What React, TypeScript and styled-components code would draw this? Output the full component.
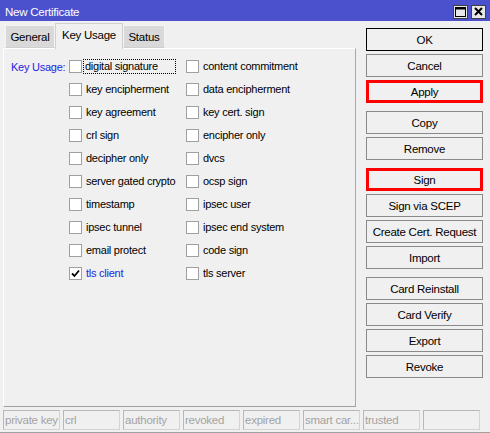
import styled, { createGlobalStyle } from "styled-components";

const GlobalStyle = createGlobalStyle`
  html, body {
    margin: 0;
    padding: 0;
    background: #f0f0f0;
  }
  * {
    box-sizing: border-box;
  }
`;

const Janela = styled.div`
  width: 490px;
  height: 433px;
  display: flex;
  flex-direction: column;
  background: #f0f0f0;
  font-family: "Liberation Sans", Arial, sans-serif;
  font-size: 11px;
  letter-spacing: -0.25px;
  color: #000;
  overflow: hidden;
  white-space: nowrap;
`;

const BarraTitulo = styled.div`
  height: 21px;
  flex-shrink: 0;
  display: flex;
  align-items: center;
  justify-content: space-between;
  padding: 0 4px 0 5px;
  background: #4b50cc;
  color: #fff;
  font-size: 11.5px;
`;

const Titulo = styled.span`
  padding-top: 2px;
`;

const BotoesTitulo = styled.div`
  display: flex;
  gap: 3px;
  margin-top: 2px;
`;

const BotaoTitulo = styled.div`
  width: 15px;
  height: 14px;
  background: #e8e8e8;
  border: 1px solid #404040;
  display: flex;
  align-items: center;
  justify-content: center;
`;

const Corpo = styled.div`
  flex: 1;
  display: flex;
  padding-top: 2px;
`;

const ColunaEsquerda = styled.div`
  width: 356px;
  padding-left: 3px;
  display: flex;
  flex-direction: column;
`;

const Abas = styled.div`
  height: 25px;
  display: flex;
  align-items: flex-end;
  padding-left: 2px;
  position: relative;
  z-index: 1;
  font-size: 11.5px;
`;

const Aba = styled.div<{ $ativa?: boolean; $largura: number }>`
  width: ${(p) => p.$largura}px;
  height: ${(p) => (p.$ativa ? 26 : 23)}px;
  margin-bottom: ${(p) => (p.$ativa ? -1 : 0)}px;
  display: flex;
  align-items: center;
  justify-content: center;
  padding-bottom: ${(p) => (p.$ativa ? 4 : 0)}px;
  background: ${(p) => (p.$ativa ? "#f0f0f0" : "#d9d9d9")};
  border: 1px solid ${(p) => (p.$ativa ? "#d0d0d0" : "#f4f4f4")};
  border-bottom: ${(p) => (p.$ativa ? "none" : "1px solid #d0d0d0")};
`;

const Painel = styled.div`
  height: 359px;
  border: 1px solid #d8d8d8;
  border-top-color: #ffffff;
  border-left-color: #ffffff;
  border-right-color: #a8a8a8;
  border-bottom-color: #a0a0a0;
  padding: 10px 0 0 7px;
`;

const Grade = styled.div`
  display: grid;
  grid-template-columns: 58px 117px 1fr;
  grid-auto-rows: 23px;
`;

const Rotulo = styled.div`
  color: #1e1ee6;
  display: flex;
  align-items: flex-start;
  padding-top: 2px;
`;

const Opcao = styled.label<{ $coluna: number }>`
  grid-column: ${(p) => p.$coluna};
  display: flex;
  align-items: flex-start;
  gap: 3px;
  padding-top: 1px;
`;

const Caixa = styled.span`
  width: 13px;
  height: 13px;
  flex-shrink: 0;
  background: #fff;
  border: 1px solid #a0a0a0;
  display: flex;
  align-items: center;
  justify-content: center;
`;

const TextoOpcao = styled.span<{ $foco?: boolean; $azul?: boolean }>`
  color: ${(p) => (p.$azul ? "#1e1ee6" : "#000")};
  line-height: 13px;
  padding: 0 1px;
  ${(p) =>
    p.$foco
      ? `outline: 1px dotted #000; outline-offset: 0; min-width: 91px; margin-left: -1px;`
      : ""}
`;

const ColunaBotoes = styled.div`
  width: 117px;
  margin-left: 10px;
  padding-top: 5px;
  display: flex;
  flex-direction: column;
`;

const Grupo = styled.div`
  display: flex;
  flex-direction: column;
  gap: 3px;
  & + & {
    margin-top: 8px;
  }
`;

const Botao = styled.button<{ $padrao?: boolean; $destaque?: boolean }>`
  height: 23px;
  width: 117px;
  font-family: inherit;
  font-size: 11.5px;
  letter-spacing: -0.25px;
  color: #000;
  background: #f0f0f0;
  border: ${(p) =>
    p.$destaque ? "3px solid #ff0000" : p.$padrao ? "1px solid #000" : "1px solid #8a8a8a"};
  padding: 0;
  cursor: pointer;
`;

const BarraStatus = styled.div`
  display: flex;
  gap: 3px;
  padding: 2px 0 0 3px;
  height: 25px;
  border-bottom: 1px solid #a0a0a0;
`;

const CampoStatus = styled.div`
  width: 57px;
  height: 20px;
  border: 1px solid #d4d4d4;
  border-top-color: #b8b8b8;
  border-left-color: #b8b8b8;
  color: #a3a3a3;
  padding: 3px 0 0 1px;
  font-size: 11.5px;
  overflow: hidden;
`;

const opcoes = [
  ["digital signature", "content commitment"],
  ["key encipherment", "data encipherment"],
  ["key agreement", "key cert. sign"],
  ["crl sign", "encipher only"],
  ["decipher only", "dvcs"],
  ["server gated crypto", "ocsp sign"],
  ["timestamp", "ipsec user"],
  ["ipsec tunnel", "ipsec end system"],
  ["email protect", "code sign"],
  ["tls client", "tls server"],
];

const grupos = [
  [
    { texto: "OK", padrao: true },
    { texto: "Cancel" },
    { texto: "Apply", destaque: true },
  ],
  [{ texto: "Copy" }, { texto: "Remove" }],
  [
    { texto: "Sign", destaque: true },
    { texto: "Sign via SCEP" },
    { texto: "Create Cert. Request" },
    { texto: "Import" },
  ],
  [
    { texto: "Card Reinstall" },
    { texto: "Card Verify" },
    { texto: "Export" },
    { texto: "Revoke" },
  ],
];

const status = ["private key", "crl", "authority", "revoked", "expired", "smart car...", "trusted", ""];

function Marcado() {
  return (
    <svg width="9" height="9" viewBox="0 0 9 9">
      <path d="M1 4.5 L3.5 7 L8 1.5" stroke="#000" strokeWidth="1.8" fill="none" />
    </svg>
  );
}

function Opcoes() {
  return (
    <Grade>
      {opcoes.flatMap(([a, b], i) => [
        i === 0 ? <Rotulo key="rotulo">Key Usage:</Rotulo> : <span key={"vazio" + i} />,
        <Opcao key={a} $coluna={2}>
          <Caixa>{a === "tls client" && <Marcado />}</Caixa>
          <TextoOpcao $foco={i === 0} $azul={a === "tls client"}>
            {a}
          </TextoOpcao>
        </Opcao>,
        <Opcao key={b} $coluna={3}>
          <Caixa />
          <TextoOpcao>{b}</TextoOpcao>
        </Opcao>,
      ])}
    </Grade>
  );
}

export default function App() {
  return (
    <>
      <GlobalStyle />
      <Janela>
        <BarraTitulo>
          <Titulo>New Certificate</Titulo>
          <BotoesTitulo>
            <BotaoTitulo>
              <svg width="11" height="10" viewBox="0 0 11 10">
                <rect x="0.5" y="0.5" width="10" height="9" fill="none" stroke="#000" />
                <rect x="0.5" y="0.5" width="10" height="2" fill="#000" />
              </svg>
            </BotaoTitulo>
            <BotaoTitulo>
              <svg width="9" height="9" viewBox="0 0 9 9">
                <path d="M1 1 L8 8 M8 1 L1 8" stroke="#000" strokeWidth="2" />
              </svg>
            </BotaoTitulo>
          </BotoesTitulo>
        </BarraTitulo>
        <Corpo>
          <ColunaEsquerda>
            <Abas>
              <Aba $largura={50}>General</Aba>
              <Aba $largura={68} $ativa>
                Key Usage
              </Aba>
              <Aba $largura={42}>Status</Aba>
            </Abas>
            <Painel>
              <Opcoes />
            </Painel>
          </ColunaEsquerda>
          <ColunaBotoes>
            {grupos.map((g, i) => (
              <Grupo key={i}>
                {g.map((b) => (
                  <Botao key={b.texto} $padrao={b.padrao} $destaque={b.destaque}>
                    {b.texto}
                  </Botao>
                ))}
              </Grupo>
            ))}
          </ColunaBotoes>
        </Corpo>
        <BarraStatus>
          {status.map((s, i) => (
            <CampoStatus key={i}>{s}</CampoStatus>
          ))}
        </BarraStatus>
      </Janela>
    </>
  );
}
